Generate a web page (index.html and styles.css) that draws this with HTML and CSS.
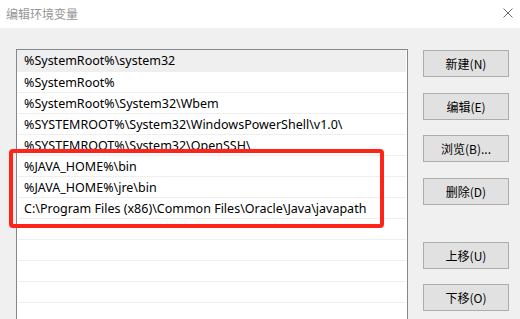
FILE: index.html
```html
<!DOCTYPE html>
<html lang="zh-CN">
<head>
<meta charset="utf-8">
<title>编辑环境变量</title>
<link rel="stylesheet" href="styles.css">
</head>
<body>
<div class="window">
  <div class="titlebar">
    <span class="title">编辑环境变量</span>
    <svg class="close" width="10" height="10" viewBox="0 0 10 10"><path d="M0.5 0.5 L9.5 9.5 M9.5 0.5 L0.5 9.5" stroke="#6b6b6b" stroke-width="1" fill="none"/></svg>
  </div>
  <div class="content">
    <div class="listbox">
      <div class="row selected">%SystemRoot%\system32</div>
      <div class="row">%SystemRoot%</div>
      <div class="row">%SystemRoot%\System32\Wbem</div>
      <div class="row">%SYSTEMROOT%\System32\WindowsPowerShell\v1.0\</div>
      <div class="row">%SYSTEMROOT%\System32\OpenSSH\</div>
      <div class="row">%JAVA_HOME%\bin</div>
      <div class="row">%JAVA_HOME%\jre\bin</div>
      <div class="row">C:\Program Files (x86)\Common Files\Oracle\Java\javapath</div>
      <div class="row"></div>
      <div class="row"></div>
      <div class="row"></div>
      <div class="row"></div>
      <div class="row"></div>
    </div>
    <div class="buttons">
      <button class="btn">新建(N)</button>
      <button class="btn m16">编辑(E)</button>
      <button class="btn m15">浏览(B)...</button>
      <button class="btn m16">删除(D)</button>
      <button class="btn m37">上移(U)</button>
      <button class="btn m15">下移(O)</button>
    </div>
    <div class="highlight"></div>
  </div>
</div>
</body>
</html>
```
FILE: styles.css
```css
html, body {
  margin: 0;
  padding: 0;
  width: 520px;
  height: 319px;
  overflow: hidden;
  background: #f0f0f0;
  font-family: "Noto Sans", "Noto Sans CJK SC", sans-serif;
  font-size: 12px;
  color: #000;
}
.window {
  position: relative;
  width: 520px;
  height: 319px;
}
.titlebar {
  height: 28px;
  background: #fff;
  display: flex;
  align-items: center;
  justify-content: space-between;
  padding: 0 7px 0 6px;
  box-sizing: border-box;
}
.title {
  color: #959595;
  font-family: "Noto Sans CJK SC", sans-serif;
  font-size: 12px;
  margin-top: -1px;
}
.close {
  display: block;
  margin-top: -3px;
}
.content {
  display: flex;
  padding: 21px 0 0 16px;
  position: relative;
}
.listbox {
  width: 392px;
  height: 270px;
  box-sizing: border-box;
  border: 1px solid #828790;
  border-bottom: none;
  background: #fff;
  padding-top: 1px;
  overflow: hidden;
  flex: none;
}
.row {
  height: 21px;
  box-sizing: border-box;
  margin: 0 1px;
  padding-left: 6px;
  border-bottom: 1px solid #efefef;
  line-height: 21px;
  font-size: 12.5px;
  white-space: nowrap;
}
.row.selected {
  background: #efefef;
  margin-top: -1px;
  height: 22px;
  margin-left: 0;
  padding-left: 7px;
}
.buttons {
  display: flex;
  flex-direction: column;
  margin-left: 15px;
  padding-top: 1px;
}
.btn {
  width: 86px;
  height: 27px;
  box-sizing: border-box;
  background: #e1e1e1;
  border: 1px solid #adadad;
  font-family: "Noto Sans CJK SC", sans-serif;
  font-size: 12px;
  color: #000;
  padding: 0 0 1px;
  margin: 0;
}
.btn.m15 { margin-top: 15px; }
.btn.m16 { margin-top: 16px; }
.btn.m37 { margin-top: 37px; }
.highlight {
  position: absolute;
  left: 9px;
  top: 121px;
  width: 375px;
  height: 79px;
  box-sizing: border-box;
  border: 4.5px solid #ff2419;
  border-radius: 4px;
}
```
